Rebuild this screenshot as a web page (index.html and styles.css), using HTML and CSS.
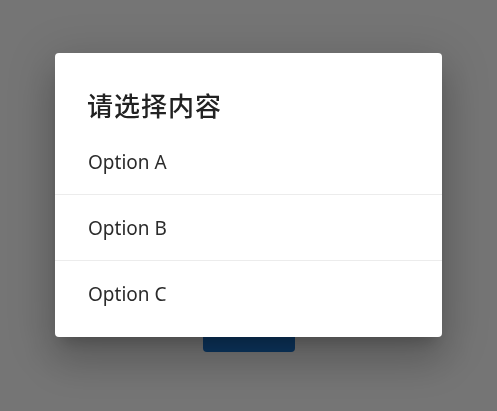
FILE: index.html
```html
<!DOCTYPE html>
<html lang="zh">
<head>
<meta charset="utf-8">
<title>请选择内容</title>
<link rel="stylesheet" href="styles.css">
</head>
<body>
<main class="page">
  <button class="open-btn" type="button">打开</button>
</main>
<div class="overlay">
  <div class="dialog" role="dialog">
    <h2 class="dialog-title">请选择内容</h2>
    <ul class="options">
      <li class="option">Option A</li>
      <li class="option">Option B</li>
      <li class="option">Option C</li>
    </ul>
  </div>
</div>
</body>
</html>
```
FILE: styles.css
```css
html, body {
  margin: 0;
  padding: 0;
  height: 100%;
}
body {
  background: #757575;
  font-family: "Noto Sans", "Noto Sans CJK SC", sans-serif;
  overflow: hidden;
}
.page {
  display: flex;
  justify-content: center;
  padding-top: 316px;
}
.open-btn {
  width: 92px;
  height: 36px;
  border: 0;
  border-radius: 4px;
  background: #0c3660;
  color: #0c3660;
  font-size: 14px;
  margin-left: 1px;
}
.overlay {
  position: fixed;
  inset: 0;
  display: flex;
  justify-content: center;
  align-items: flex-start;
  padding-top: 53px;
}
.dialog {
  width: 387px;
  background: #fff;
  border-radius: 4px;
  padding: 36px 0 11px;
  box-sizing: border-box;
  box-shadow: 0 11px 15px -7px rgba(0,0,0,.2), 0 24px 38px 3px rgba(0,0,0,.14), 0 9px 46px 8px rgba(0,0,0,.12);
}
.dialog-title {
  margin: 0 0 8px;
  padding: 0 32px;
  font-family: "Noto Sans CJK SC", sans-serif;
  font-size: 26px;
  font-weight: 500;
  letter-spacing: 1px;
  line-height: 32px;
  color: #222;
}
.options {
  list-style: none;
  margin: 0;
  padding: 0;
}
.option {
  height: 65px;
  display: flex;
  align-items: center;
  padding: 0 33px;
  font-size: 19px;
  color: #2b2b2b;
}
.option + .option {
  border-top: 1px solid #ececec;
}
```
